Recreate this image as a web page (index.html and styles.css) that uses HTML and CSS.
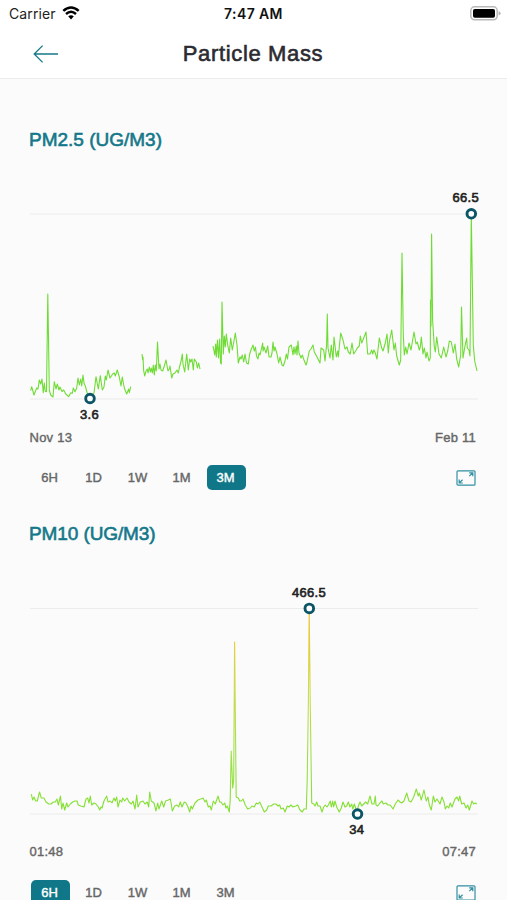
FILE: index.html
```html
<!doctype html>
<html lang="en">
  <head>
    <meta charset="utf-8">
    <meta name="viewport" content="width=device-width, initial-scale=1">
    <title>Particle Mass</title>
    <link rel="stylesheet" href="styles.css">
  </head>
  <body>
    <div class="status-bar">
      <div class="carrier">
        <span>Carrier</span>
        <svg class="wifi" width="18" height="14" viewBox="0 0 18 14">
          <path d="M1.3 4.9Q9-1.9 16.7 4.9" fill="none" stroke="#000" stroke-width="2.6"/>
          <path d="M4 8Q9 3.6 14 8" fill="none" stroke="#000" stroke-width="2.4"/>
          <path d="M6.2 10.3Q9 8 11.8 10.3L9 13.4Z"/>
        </svg>
      </div>
      <span class="time">7:47 AM</span>
      <svg class="battery" width="31" height="15" viewBox="0 0 31 15">
        <rect x=".8" y=".8" width="26.4" height="13" rx="3.8" fill="#fff" stroke="#b9b9b9" stroke-width="1.5"/>
        <rect x="3" y="3" width="22" height="8.8" rx="1.8"/>
        <path d="M28.6 5.2q2 .5 2 2.1t-2 2.1z" fill="#b3b3b3"/>
      </svg>
    </div>

    <header class="nav">
      <svg class="back" width="26" height="20" viewBox="0 0 26 20">
        <path d="M25 10H1.2M9.6 1.6L1.2 10l8.4 8.4" fill="none" stroke="#16788a" stroke-width="1.3"/>
      </svg>
      <h1>Particle Mass</h1>
    </header>

    <main>
      <section class="sensor">
        <h2>PM2.5 (UG/M3)</h2>
        <svg class="chart" width="507" height="245" viewBox="0 180 507 245">
          <path class="grid" d="M30 214H478M30 399H478"/>
          <polyline class="line" points="30.7,390.7 31.7,386.7 34,395 36.7,388 38,389 39.3,380 40.7,384 42,379 43.3,392.7 44.3,383 45.3,391.5 46.5,391.7 47.8,294 49.3,390 50.7,395 53,397 54.3,381.7 56,389 57.3,384 59,390 60,387 62,391.5 63.7,390 65.7,394 68.7,396.7 70.7,392.7 72.3,393.3 73.3,388 75,391.7 76.7,388 78,378 79.3,385 80.7,379 81.7,386 83,375 84,383 85.3,386 87.7,395 90,398.5 94,393 96,376.7 98.3,389 100.3,375.7 102.3,390 104,387 105.3,376 106.3,380 108,370 110,378 112.7,374 114.3,373 115.3,376 117.3,370 119.3,377 121,386 122.3,377 124.3,388 126.7,394 128.7,389 129.3,392.7 130.7,386.7"/>
          <polyline class="line" points="142,354 142.7,360 143,357 143.7,371 144.7,376 146,371 147.3,369 148,373 149.3,367 150.3,372 151.3,368 152.3,373 153.3,365 154.3,375 155.3,365 156.3,371 157.5,342 159,369 160,364 161,370 162.7,371 164.3,366 166,360 168,371 169.3,369 170,366 171.7,378 173,374 175,373 177,370 178.3,373 179.3,368 181.3,360 182.3,354 183,364 184.7,372 186.7,354 188.3,370 189.7,359 190.7,362 192,359 193.3,370 194.3,359 196.3,362 197.3,368 198.7,363 200,369"/>
          <polyline class="line" points="213,346 214,351 214.7,355 215.7,344 216.3,357 217.5,340 218.5,358 219.7,339 220.5,363 221.3,364 222,302 223.3,354 224.3,336 225.3,347 226.3,334 227.7,345 229.3,353 230.7,338 232.3,350 234,341 235.3,333 237,345 238.3,363 240,357 241,359 242.3,355 243.7,362 245,354 246.5,363 248.3,364 249.7,354 251,350 253,345 254.3,351 255.5,347 256.5,356 258,359 259,353 260,355 262.7,343 263,351 264,347 266,353 267.7,346 269,357 271,357 272,353 273,342 274,351 275,347 277,354 278.7,363 280,357 282,365 283.3,366 285,361 286.3,354 287.5,359 289,347 291.3,345 293,355 294,347 295,354 296.3,346 297,355 298,341 299,353 301,358 302.3,355 304,360 306,365 307,362 309.3,351 311,349 313,345 314.3,352 316,355 318,359 320,363 321,348 323.7,350 325,361 326.6,345 327.3,314 328,348 330,358 331.3,345 333,360 334,337 336.3,357 337.7,351 338.3,357 340.7,333 343,340 345,349 347,347 348.3,352 350.3,354 352,343 353.7,354 355.7,351 357.3,348 359.3,346 360.3,336 361.7,343 363.7,338 366,332 367.7,354 370,354 371.7,350 372.7,354 374,350 375.3,353 377,359 379.3,338 381.7,348 383,351 385.3,343 387,334 388.3,353 389.3,342 391.7,330 394,350 395.3,343 396.7,356 399.3,365 400.7,360 402,253 403.3,335 404.3,355 405.7,347 407,354 409,343 411,350 414,332 416,344 417.3,342 419.3,350 420.3,347 421.3,337 423,354 424.3,348 426,358 427,352 429,361 430.3,358 430.5,300 431,326 431.6,234 432.6,320 434.3,347 435.3,352 436.7,337 439,354 441.3,358 443.7,347 446,357 447.7,351 449.3,341 451.3,342 453.3,353 455,344 456.7,359 458.7,367 460.7,355 461.5,307 463,358 465,346 466.7,338 467.3,348 469,350 470,356 471.3,215 473.3,345 474.7,361 477,371"/>
          <circle class="marker" cx="90" cy="398.5" r="4.3"/>
          <circle class="marker" cx="471.3" cy="213.8" r="4.3"/>
          <text class="value" x="89.5" y="418.5">3.6</text>
          <text class="value" x="465.7" y="202">66.5</text>
        </svg>
        <div class="range">
          <span>Nov 13</span>
          <span>Feb 11</span>
        </div>
        <div class="controls">
          <div class="tabs">
            <span class="tab">6H</span>
            <span class="tab">1D</span>
            <span class="tab">1W</span>
            <span class="tab">1M</span>
            <span class="tab active">3M</span>
          </div>
          <svg class="expand" width="20" height="16" viewBox="0 0 20 16">
            <rect x="1" y=".8" width="18" height="14.4" rx="1"/>
            <path d="M13.2 2.8h3.6v3.4M16.8 2.8l-3.5 3.3M3.2 9.6v3.4h3.6M3.2 13l3.4-3.2"/>
          </svg>
        </div>
      </section>

      <section class="sensor pm10">
        <h2>PM10 (UG/M3)</h2>
        <svg class="chart" width="507" height="265" viewBox="0 575 507 265">
          <defs>
            <linearGradient id="level" gradientUnits="userSpaceOnUse" x1="0" y1="608" x2="0" y2="814">
              <stop offset="0" stop-color="#f2c42c"/>
              <stop offset=".4" stop-color="#cddb50"/>
              <stop offset=".75" stop-color="#9cdf4b"/>
              <stop offset="1" stop-color="#7fe02e"/>
            </linearGradient>
          </defs>
          <path class="grid" d="M30 608.5H478M30 814H478"/>
          <polyline class="line level" points="31.3,794 32.7,800 34,797 35.7,801 37.3,801 39.5,792 41.3,798 44,798 46,802 48.7,804 51,804 53.3,802 55.3,802 57,799 58.3,805 60.5,796 61.7,809 63,803 64.7,810 66.7,803 68,807 70.3,804 72.7,802 75,801 77,801 78.3,805 80.7,806 84,807 86,799 87.7,798 89,803 90.3,796 91.7,805 94,803 96,804 98.3,807 99.7,810 101,807 102,808 104,801 106.7,796 108,802 110.3,801 112,803 114,798 115.3,801 116.7,797 118,807 120,800 121.7,802 122.7,798 124.7,801 127,798 129,802 131.3,804 133,801 135,809 136.7,795 138,807 140.3,802 143,801 145,804 147.3,802 148.7,807 149.7,792 151.3,801 154,803 156,811 157.7,803 159,809 161.7,801 163.7,807 165.5,801 168.3,800 170.3,799 171.3,804 172.3,811 174.7,806 177,805 178.7,807 180.3,802 182,807 184.3,802 186,803 188,807 189.7,812 191,806 192.3,809 195,803 198,800 200.7,799 203,798 205,802 206.3,800 208.3,807 210,806 211.3,810 213.3,801 215.3,804 218,796 219.7,802 221,802 223,805 224.7,803 226,808 227.3,806 229.3,812 230.2,800 231.2,751 232.7,788 233.7,780 234.6,642 236.2,797 238.3,798 239.7,801 241.3,801 243,799 245.3,805 247.7,809 250.3,808 252,806 254.3,807 256.3,803 258,804 259.7,802 262,807 264.3,812 266.7,810 268.3,806 271,806 273.7,804 276,804 278,806 279.7,805 281,809 283.3,808 285,812 287.3,806 289,807 291,805 293,807 295.7,806 297.7,805 300,810 302.3,812 304,809 306.3,809 307.2,780 308.4,700 309.2,610 310.2,700 311.7,803 313.7,804 315,806 316.7,802 318,806 320,806 322,812 323.7,807 325.3,805 327,807 328.3,805 330.3,801 331.3,807 332.7,801 333.7,807 335,801 336.7,807 339.3,812 341.3,808 343,802 345,807 346.7,806 348.3,802 350,807 351.7,804 352.7,809 354.3,804 356,809 357,813.5 358.3,806 360,802 361.7,806 363.7,804 365.7,802 367.7,804 370,796 372,804 374,804 375.3,796 376,805 377.7,806 380,803 382,801 383.3,804 386,803 388,805 390.3,805 393,809 395.3,804 398,800 400,802 401.7,803 404,801 406.7,793 409,801 411,802 413.7,797 416.3,789 418.3,796 419.3,793 421.3,800 424,790 426.3,801 428,797 429.3,805 431.3,810 433.3,796 435,802 437,799 440,804 442,797 444,802 445.3,809 447,806 448.7,808 450.3,803 452,807 455,799 457,797 458.7,801 459.7,796 461.7,804 464,803 466,808 467.7,805 469.3,810 472,801 473.7,804 475.3,803 476.7,804"/>
          <circle class="marker" cx="309.3" cy="608.4" r="4.3"/>
          <circle class="marker" cx="357.5" cy="814" r="4.3"/>
          <text class="value" x="309" y="596.5">466.5</text>
          <text class="value" x="356.7" y="834">34</text>
        </svg>
        <div class="range">
          <span>01:48</span>
          <span>07:47</span>
        </div>
        <div class="controls">
          <div class="tabs">
            <span class="tab active">6H</span>
            <span class="tab">1D</span>
            <span class="tab">1W</span>
            <span class="tab">1M</span>
            <span class="tab">3M</span>
          </div>
          <svg class="expand" width="20" height="16" viewBox="0 0 20 16">
            <rect x="1" y=".8" width="18" height="14.4" rx="1"/>
            <path d="M13.2 2.8h3.6v3.4M16.8 2.8l-3.5 3.3M3.2 9.6v3.4h3.6M3.2 13l3.4-3.2"/>
          </svg>
        </div>
      </section>
    </main>
  </body>
</html>
```
FILE: styles.css
```css
* {
  margin: 0;
  padding: 0;
  box-sizing: border-box;
}

body {
  height: 900px;
  overflow: hidden;
  background: #fbfbfb;
  font-family: "Liberation Sans", Arial, sans-serif;
}

svg {
  display: block;
}

/* Status bar */
.status-bar {
  display: grid;
  grid-template-columns: 1fr auto 1fr;
  align-items: center;
  height: 28px;
  padding: 0 6px 0 9px;
  background: #fff;
  font-family: Inter, sans-serif;
  font-size: 14px;
  line-height: 28px;
  color: #222;
}

.carrier {
  display: flex;
  align-items: center;
  gap: 6px;
  letter-spacing: 0.1px;
}

.wifi {
  margin-top: -3px;
}

.time {
  margin: 0 2px 0 -1px;
  font-weight: 600;
  color: #111;
  letter-spacing: 0.4px;
}

.battery {
  justify-self: end;
  margin-top: -2px;
}

/* Navigation */
.nav {
  display: grid;
  grid-template-columns: 1fr auto 1fr;
  align-items: center;
  height: 51px;
  padding: 2px 34px 0 33px;
  background: #fff;
  border-bottom: 1px solid #ececec;
}

.nav h1 {
  font-size: 22px;
  font-weight: 400;
  line-height: 30px;
  letter-spacing: 0.65px;
  color: #2b2b31;
  -webkit-text-stroke: 0.6px #2b2b31;
}

/* Sensor sections */
.sensor {
  height: 395px;
  padding-top: 46px;
}

.sensor h2 {
  height: 55px;
  padding-left: 29px;
  font-size: 19px;
  font-weight: 400;
  line-height: 29px;
  color: #14788a;
  -webkit-text-stroke: 0.6px #14788a;
}

.sensor.pm10 h2 {
  line-height: 28px;
  letter-spacing: -0.1px;
}

.chart {
  overflow: visible;
}

.grid {
  stroke: #ececec;
  stroke-width: 1.2;
}

.line {
  fill: none;
  stroke: #6fdc35;
  stroke-width: 1.1;
  stroke-linejoin: round;
}

.line.level {
  stroke: url(#level);
}

.marker {
  fill: #fff;
  stroke: #0b5566;
  stroke-width: 2.9;
}

.value {
  font-size: 13px;
  font-weight: 400;
  letter-spacing: 0.3px;
  text-anchor: middle;
  fill: #222;
  stroke: #222;
  stroke-width: 0.6px;
}

.range {
  display: flex;
  justify-content: space-between;
  height: 40px;
  padding: 0 31px 0 29.5px;
  font-size: 13px;
  line-height: 25px;
  letter-spacing: 0.25px;
  color: #666;
  -webkit-text-stroke: 0.4px #666;
}

.pm10 .range {
  line-height: 24px;
}

.controls {
  display: flex;
  align-items: center;
  justify-content: space-between;
  height: 25px;
  padding: 0 31px;
}

.tabs {
  display: flex;
  gap: 5px;
}

.tab {
  width: 39px;
  height: 25px;
  padding-right: 2px;
  border-radius: 5px;
  font-size: 13px;
  line-height: 25px;
  text-align: center;
  color: #666;
  -webkit-text-stroke: 0.4px #666;
}

.tab.active {
  background: #0f7788;
  color: #fff;
  -webkit-text-stroke: 0.4px #fff;
}

.expand {
  fill: none;
  stroke: #3290a2;
  stroke-width: 1.2;
}
```
